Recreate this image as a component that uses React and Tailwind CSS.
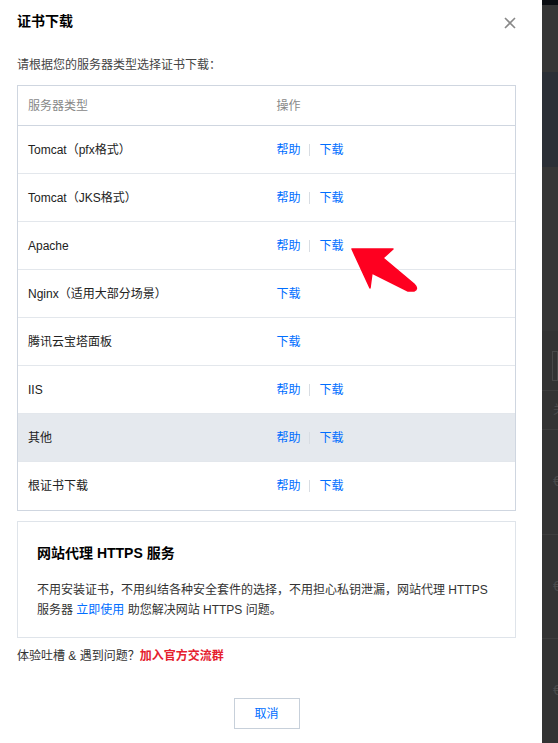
import React from "react";

const rows = [
  { name: "Tomcat（pfx格式）", help: true },
  { name: "Tomcat（JKS格式）", help: true },
  { name: "Apache", help: true },
  { name: "Nginx（适用大部分场景）", help: false },
  { name: "腾讯云宝塔面板", help: false },
  { name: "IIS", help: true },
  { name: "其他", help: true, active: true },
  { name: "根证书下载", help: true, last: true },
];

const font = { fontFamily: '"Liberation Sans", "Noto Sans CJK SC", sans-serif' };

const SideStrip = () => (
  <div className="w-[16px] h-[743px] flex flex-col overflow-hidden">
    <div className="h-[5px] bg-[#0b0d12]" />
    <div className="h-[71px] bg-[#363636]" />
    <div className="h-[99px] bg-[#2b2f36]" />
    <div className="h-[172px] bg-[#363636]" />
    <div className="flex-1 bg-[#333333] flex flex-col">
      <div className="h-[20px]" />
      <div className="h-[30px] ml-[10px] border border-[#484848]" />
      <div className="h-[10px] border-b border-[#3d3d3d]" />
      <div className="h-[39px] border-b border-[#3d3d3d] pl-[11px] flex items-center text-[12px] text-[#4a4a4a] whitespace-nowrap">关</div>
      <div className="h-[105px] border-b border-[#3d3d3d] pl-[11px] flex items-center text-[14px] text-[#4a4a4a] whitespace-nowrap">€</div>
      <div className="h-[104px] border-b border-[#3d3d3d] pl-[11px] flex items-center text-[14px] text-[#4a4a4a] whitespace-nowrap">€</div>
      <div className="h-[104px] pl-[11px] flex items-center text-[14px] text-[#4a4a4a] whitespace-nowrap">€</div>
    </div>
  </div>
);

const Arrow = () => (
  <svg className="absolute left-0 top-0 pointer-events-none" width="558" height="743" viewBox="0 0 558 743">
    <path
      d="M352 249 L393 249 L383 258 L414 284 Q419 289 414 291 L408 291 L372 273 L370 288 Z"
      fill="#fe0020"
      stroke="#fe0020"
      strokeWidth="1.5"
      strokeLinejoin="round"
    />
  </svg>
);

export default function App() {
  return (
    <div className="relative flex w-[558px] h-[743px] overflow-hidden bg-white" style={font}>
      <div className="w-[542px] h-[743px] bg-white pl-[17px] pr-[26px] pt-[11px]">
        <div className="flex items-center justify-between h-[20px]">
          <h2 className="text-[14px] leading-[20px] font-bold text-[#000]">证书下载</h2>
          <svg width="12" height="12" viewBox="0 0 12 12" className="mt-[4px]">
            <path d="M1 1 L11 11 M11 1 L1 11" stroke="#888" strokeWidth="1.6" />
          </svg>
        </div>

        <p className="mt-[24px] text-[12px] leading-[20px] text-[#444]">请根据您的服务器类型选择证书下载：</p>

        <div className="mt-[10px] border border-[#cfd6e0]">
          <div className="h-[40px] flex items-center border-b border-[#cfd6e0] text-[12px] text-[#888]">
            <div className="w-1/2 pl-[10px]">服务器类型</div>
            <div className="w-1/2 pl-[10px]">操作</div>
          </div>
          {rows.map((r) => (
            <div
              key={r.name}
              className={`h-[48px] flex items-center text-[12px] text-[#222] ${r.last ? "" : "border-b border-[#e3e7ec]"} ${r.active ? "bg-[#e5e9ee]" : ""}`}
            >
              <div className="w-1/2 pl-[10px]">{r.name}</div>
              <div className="w-1/2 pl-[10px] flex items-center text-[#006eff]">
                {r.help && (
                  <>
                    <span>帮助</span>
                    <span className="ml-[8px] mr-[10px] w-px h-[12px] bg-[#d8dde3]" />
                  </>
                )}
                <span>下载</span>
              </div>
            </div>
          ))}
        </div>

        <div className="mt-[10px] border border-[#dfe4ea] pt-[21px] pb-[17px] pl-[19px] pr-[19px]">
          <h3 className="text-[14px] leading-[20px] font-bold text-[#000]">网站代理 HTTPS 服务</h3>
          <p className="mt-[17px] text-[12px] leading-[20px] text-[#333]">
            不用安装证书，不用纠结各种安全套件的选择，不用担心私钥泄漏，网站代理 HTTPS 服务器{" "}
            <span className="text-[#006eff]">立即使用</span> 助您解决网站 HTTPS 问题。
          </p>
        </div>

        <p className="mt-[8px] text-[12px] leading-[20px] text-[#333]">
          体验吐槽 &amp; 遇到问题？<span className="font-bold text-[#e5202e]">加入官方交流群</span>
        </p>

        <div className="mt-[32px] flex justify-center">
          <button className="w-[66px] h-[31px] border border-[#c7d0da] bg-white text-[12px] text-[#006eff]">取消</button>
        </div>
      </div>
      <SideStrip />
      <Arrow />
    </div>
  );
}
